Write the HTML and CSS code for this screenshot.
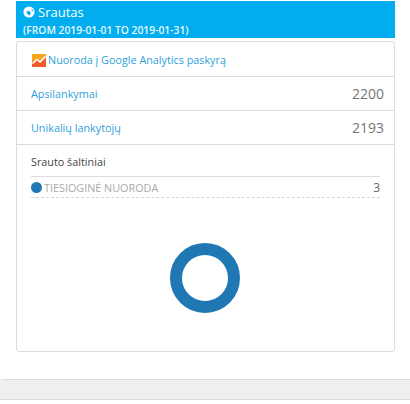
FILE: index.html
```html
<!DOCTYPE html>
<html lang="en">

<head>
    <meta charset="UTF-8">
    <title>Srautas</title>
    <link rel="stylesheet" href="styles.css">
</head>

<body>
    <div class="panel">
        <div class="panel-head">
            <div class="panel-title">
                <svg class="globe" width="12" height="12" viewBox="0 0 12 12">
                    <circle cx="6" cy="6" r="5.6" fill="#fff"/>
                    <path d="M3.4 5.6 Q6 4.4 7.4 6 Q8.4 7.6 6.6 9.4 Q4.4 9.4 3.4 5.6Z M8.6 2.6 L10.2 4.4 L9 5.4Z" fill="#00adef"/>
                </svg>
                Srautas
            </div>
            <div class="panel-range">(FROM 2019-01-01 TO 2019-01-31)</div>
        </div>
        <div class="card">
            <div class="row row-link">
                <svg class="ga-icon" width="14" height="13" viewBox="0 0 14 13">
                    <rect width="14" height="13" fill="#f15a29"/>
                    <path d="M0 0 H14 V3 L8 7 L5 5 L0 8Z" fill="#f9a61c"/>
                    <path d="M0.5 9.5 L5 5.5 L8 8 L13.5 2.5" fill="none" stroke="#fff" stroke-width="1.6"/>
                </svg>
                <a href="#">Nuoroda į Google Analytics paskyrą</a>
            </div>
            <div class="row row-stat">
                <a href="#">Apsilankymai</a>
                <span class="stat">2200</span>
            </div>
            <div class="row row-stat">
                <a href="#">Unikalių lankytojų</a>
                <span class="stat">2193</span>
            </div>
            <div class="sources">
                <div class="sources-title">Srauto šaltiniai</div>
                <div class="legend">
                    <span class="dot"></span>
                    <span class="legend-name">TIESIOGINĖ NUORODA</span>
                    <span class="legend-val">3</span>
                </div>
                <div class="chart">
                    <div class="donut"></div>
                </div>
            </div>
        </div>
    </div>
    <div class="strip"></div>
</body>

</html>
```

FILE: styles.css
```css
body {
    margin: 0;
    padding-top: 1px;
    background: #fff;
    font-family: 'Open Sans', sans-serif;
    font-size: 10.8px;
    color: #444;
    overflow: hidden;
}

a {
    color: #2f9fdc;
    text-decoration: none;
}

.panel {
    margin: 0 15px 0 16px;
}

.panel-head {
    height: 37px;
    box-sizing: border-box;
    padding: 1px 7px 0;
    background: #00adef;
    color: #fff;
}

.panel-title {
    display: flex;
    align-items: center;
    gap: 3px;
    height: 19px;
    font-size: 13px;
}

.panel-range {
    margin-top: 3px;
    font-size: 10.3px;
    font-weight: 600;
    line-height: 12px;
    color: #e6f7fe;
}

.card {
    margin-top: 3px;
    height: 311px;
    box-sizing: border-box;
    background: #fff;
    border: 1px solid #dcdcdc;
    border-radius: 3px;
}

.row {
    display: flex;
    align-items: center;
    box-sizing: border-box;
    border-bottom: 1px solid #dcdcdc;
    padding: 0 10px 0 14px;
}

.row-link {
    height: 35px;
    padding-left: 15px;
    gap: 2px;
}

.ga-icon {
    margin-top: 3px;
}

.row-stat {
    height: 34px;
    justify-content: space-between;
}

.stat {
    font-size: 14px;
    color: #777;
}

.sources {
    padding: 0 14px;
}

.sources-title {
    height: 31px;
    line-height: 34px;
    color: #444;
}

.legend {
    display: flex;
    align-items: center;
    height: 20px;
    border-top: 1px solid #dcdcdc;
    border-bottom: 1px dashed #d6d6d6;
}

.dot {
    width: 11px;
    height: 11px;
    margin-right: 2px;
    border-radius: 50%;
    background: #1f77b4;
}

.legend-name {
    flex: 1;
    font-size: 10.8px;
    color: #a9a9a9;
}

.legend-val {
    font-size: 12px;
    color: #666;
}

.chart {
    display: flex;
    justify-content: center;
    padding: 45px 1px 0 0;
}

.donut {
    width: 46px;
    height: 46px;
    border: 12px solid #1f77b4;
    border-radius: 50%;
}

.strip {
    margin-top: 27px;
    height: 19px;
    background: #eeeff1;
    border-top: 1px solid #dcdcdc;
    border-bottom: 1px solid #dcdcdc;
    border-top-left-radius: 3px;
}
```
